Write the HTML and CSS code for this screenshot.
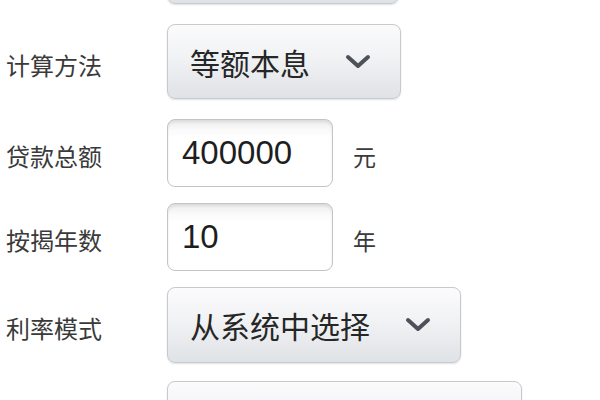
FILE: index.html
```html
<!DOCTYPE html>
<html lang="zh-CN">
<head>
<meta charset="utf-8">
<title>贷款计算</title>
<link rel="stylesheet" href="styles.css">
</head>
<body>
<div class="form">
  <div class="row">
    <span class="label"></span>
    <div class="select select-md select-w"></div>
  </div>
  <div class="row">
    <span class="label">计算方法</span>
    <div class="select select-md"><span class="select-text">等额本息</span><svg class="chev" width="26" height="16" viewBox="0 0 26 16"><polyline points="3,3 13,12 23,3"/></svg></div>
  </div>
  <div class="row">
    <span class="label">贷款总额</span>
    <div class="input">400000</div>
    <span class="unit">元</span>
  </div>
  <div class="row tight">
    <span class="label">按揭年数</span>
    <div class="input">10</div>
    <span class="unit">年</span>
  </div>
  <div class="row tight">
    <span class="label">利率模式</span>
    <div class="select"><span class="select-text">从系统中选择</span><svg class="chev" width="26" height="16" viewBox="0 0 26 16"><polyline points="3,3 13,12 23,3"/></svg></div>
  </div>
  <div class="row last">
    <span class="label"></span>
    <div class="select select-lg"></div>
  </div>
</div>
</body>
</html>
```

FILE: styles.css
```css
html, body {
  margin: 0;
  padding: 0;
  background: #ffffff;
}

body {
  font-family: "Noto Sans CJK SC", "Noto Sans", sans-serif;
  color: #333333;
  overflow: hidden;
}

.form {
  display: flex;
  flex-direction: column;
  margin-top: -71px;
}

.row {
  display: flex;
  align-items: center;
  margin-top: 20px;
}

.row:first-child {
  margin-top: 0;
}

.row.tight {
  margin-top: 16px;
}

.row.last {
  margin-top: 18px;
}

.label {
  width: 161px;
  padding-left: 6px;
  padding-top: 6px;
  flex-shrink: 0;
  font-size: 24px;
  line-height: 30px;
  color: #3a3a3a;
}

.select {
  display: flex;
  align-items: center;
  box-sizing: border-box;
  height: 76px;
  padding: 0 29px 0 22px;
  border: 1px solid #c6c9ce;
  border-radius: 8px;
  background: linear-gradient(#fbfbfc 0%, #f1f2f4 45%, #dfe2e6 100%);
  box-shadow: 0 1px 2px rgba(0, 0, 0, 0.12);
}

.select-md {
  height: 75px;
}

.select-w {
  width: 232px;
}

.select-lg {
  width: 355px;
}

.select-text {
  font-size: 30px;
  line-height: 40px;
  color: #262626;
  white-space: nowrap;
}

.chev {
  margin-left: 35px;
  flex-shrink: 0;
}

.chev polyline {
  fill: none;
  stroke: #4d525a;
  stroke-width: 4;
  stroke-linecap: round;
  stroke-linejoin: round;
}

.input {
  box-sizing: border-box;
  width: 166px;
  height: 68px;
  padding: 0 14px;
  display: flex;
  align-items: center;
  border: 1px solid #c3c4c6;
  border-radius: 8px;
  background: linear-gradient(#ececec 0px, #fafafa 10px, #ffffff 18px);
  box-shadow: inset 0 2px 3px rgba(0, 0, 0, 0.08);
  font-family: "Liberation Sans", "Noto Sans", sans-serif;
  font-size: 33px;
  color: #1e1e1e;
}

.unit {
  margin-left: 20px;
  padding-top: 6px;
  font-size: 23px;
  line-height: 30px;
  color: #3a3a3a;
}
```
